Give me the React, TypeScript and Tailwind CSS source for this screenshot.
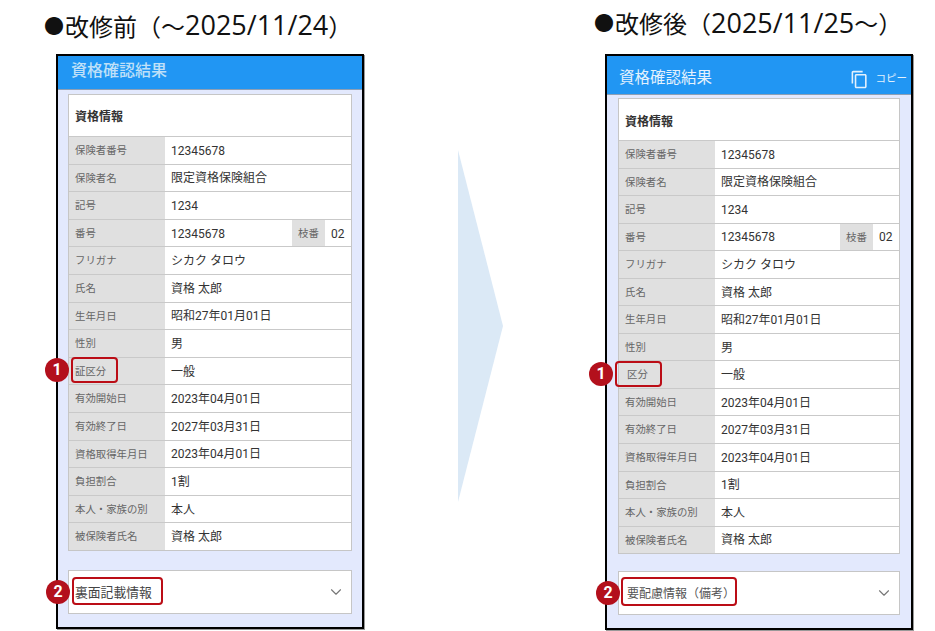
import { ChevronDown } from "lucide-react";

const ROWS = [
  ["保険者番号", "12345678"],
  ["保険者名", "限定資格保険組合"],
  ["記号", "1234"],
  ["番号", "12345678"],
  ["フリガナ", "シカク タロウ"],
  ["氏名", "資格 太郎"],
  ["生年月日", "昭和27年01月01日"],
  ["性別", "男"],
  ["区分", "一般"],
  ["有効開始日", "2023年04月01日"],
  ["有効終了日", "2027年03月31日"],
  ["資格取得年月日", "2023年04月01日"],
  ["負担割合", "1割"],
  ["本人・家族の別", "本人"],
  ["被保険者氏名", "資格 太郎"],
];

function Badge({ n, className }: { n: number; className: string }) {
  return (
    <div
      className={`absolute z-10 flex h-6 w-6 items-center justify-center rounded-full bg-[#b3101c] text-[16px] font-bold text-white ${className}`}
    >
      {n}
    </div>
  );
}

function Heading({ className, children }: { className: string; children: React.ReactNode }) {
  return (
    <div
      className={`flex h-[54px] items-center whitespace-nowrap font-['Noto_Sans_CJK_JP',sans-serif] text-[24px] text-[#111] ${className}`}
    >
      <span className="w-[21px] text-[20px]">●</span>
      {children}
    </div>
  );
}

function Phone({ after }: { after: boolean }) {
  const rowH = after ? "h-[27.55px]" : "h-[27.6px]";
  return (
    <div className="w-[308px] border-2 border-black bg-[#e3e9fd] shadow-[1px_1px_0_#999]">
      {/* App bar */}
      {after ? (
        <div className="flex h-[39px] items-center justify-between border-b border-[#8d9fb5] bg-[#2196f3] pl-[12px] pr-[4px] pt-[8px] text-[#e3f1fd]">
          <span className="text-[15.5px]">資格確認結果</span>
          <div className="flex items-center gap-[7px]">
            <svg viewBox="0 0 24 24" className="h-[19px] w-[19px]" fill="currentColor">
              <path d="M16 1H4c-1.1 0-2 .9-2 2v14h2V3h12V1zm3 4H8c-1.1 0-2 .9-2 2v14c0 1.1.9 2 2 2h11c1.1 0 2-.9 2-2V7c0-1.1-.9-2-2-2zm0 16H8V7h11v14z" />
            </svg>
            <span className="text-[10.5px]">コピー</span>
          </div>
        </div>
      ) : (
        <div className="flex h-[34px] items-center border-b border-[#8d9fb5] bg-[#2196f3] pb-[3px] pl-[13px] text-[16px] font-medium text-[#bfe0f8]">
          資格確認結果
        </div>
      )}

      <div className={after ? "px-[11px] pb-[13px] pt-[3px]" : "px-[10px] pb-[13px] pt-[4px]"}>
        {/* Card */}
        <div className="border border-[#c6c6c6] bg-white">
          <div
            className={`flex h-[41px] items-center px-[6px] text-[12px] font-bold text-[#333] ${
              after ? "pt-[5px]" : "pt-[3px]"
            }`}
          >
            資格情報
          </div>
          {ROWS.map(([label, value]) => {
            const text = label === "区分" && !after ? "証区分" : label;
            return (
              <div key={label} className={`relative flex border-t border-[#c9c9c9] ${rowH}`}>
                <div className="flex w-[96px] items-center bg-[#e0e0e0] pl-[6px] pt-[1px] text-[10.4px] text-[#666]">
                  <span className={label === "区分" && after ? "pl-[2px]" : ""}>{text}</span>
                </div>
                <div className="flex flex-1 items-center pl-[6px] pt-[1px] text-[12px] text-[#333]">
                  {value}
                </div>
                {label === "番号" && (
                  <div className="flex items-stretch">
                    <div className="flex w-[33px] items-center justify-center bg-[#e0e0e0] pt-[1px] text-[10.4px] text-[#666]">
                      枝番
                    </div>
                    <div className="flex w-[26px] items-center pl-[6px] pt-[1px] text-[12px] text-[#333]">
                      02
                    </div>
                  </div>
                )}
                {label === "区分" && (
                  <>
                    <Badge n={1} className={after ? "-left-[30px] top-[1px]" : "-left-[24px] top-0"} />
                    <div
                      className={`absolute rounded-[4px] border-[2.5px] border-[#bb0d16] ${
                        after ? "-left-[4px] top-0 h-[26px] w-[47px]" : "left-[2px] -top-[1px] h-[26px] w-[47px]"
                      }`}
                    />
                  </>
                )}
              </div>
            );
          })}
        </div>

        {/* Accordion */}
        <div
          className={`relative flex h-[44px] items-center justify-between border border-[#c6c6c6] bg-white pl-[6px] pr-[6px] ${
            after ? "mt-[17px]" : "mt-[19px]"
          }`}
        >
          <span className={after ? "pl-[2px] pt-[1px] text-[12px] text-[#555]" : "pt-[1px] text-[12.8px] text-[#444]"}>
            {after ? "要配慮情報（備考）" : "裏面記載情報"}
          </span>
          <ChevronDown size={18} strokeWidth={1.5} className="text-[#777]" />
          <Badge n={2} className="-left-[23px] top-[9px]" />
          <div
            className={`absolute rounded-[4px] border-[2.5px] border-[#bb0d16] ${
              after ? "left-[2px] top-[5px] h-[29px] w-[116px]" : "left-[3px] top-[6px] h-[28px] w-[91px]"
            }`}
          />
        </div>
      </div>
    </div>
  );
}

export default function App() {
  return (
    <div className="flex h-[631px] w-[935px] overflow-hidden bg-white pl-[44px] font-['Roboto','Noto_Sans_CJK_JP',sans-serif]">
      {/* Before */}
      <div className="w-[320px] shrink-0">
        <Heading className="pb-[3px]">
          改修前（～<span className="font-['Open_Sans',sans-serif] text-[27px]">2025/11/24</span>）
        </Heading>
        <div className="ml-[12px]">
          <Phone after={false} />
        </div>
      </div>

      {/* Arrow */}
      <svg viewBox="0 0 46 352" className="ml-[93px] mt-[150px] h-[352px] w-[46px] shrink-0">
        <polygon points="1,0 46,176 1,352" fill="#dbe9f6" />
      </svg>

      {/* After */}
      <div className="ml-[91px] w-[320px] shrink-0">
        <Heading className="pb-[8px]">
          改修後（<span className="font-['Open_Sans',sans-serif] text-[27px]">2025/11/25</span>～）
        </Heading>
        <div className="ml-[11px]">
          <Phone after />
        </div>
      </div>
    </div>
  );
}
